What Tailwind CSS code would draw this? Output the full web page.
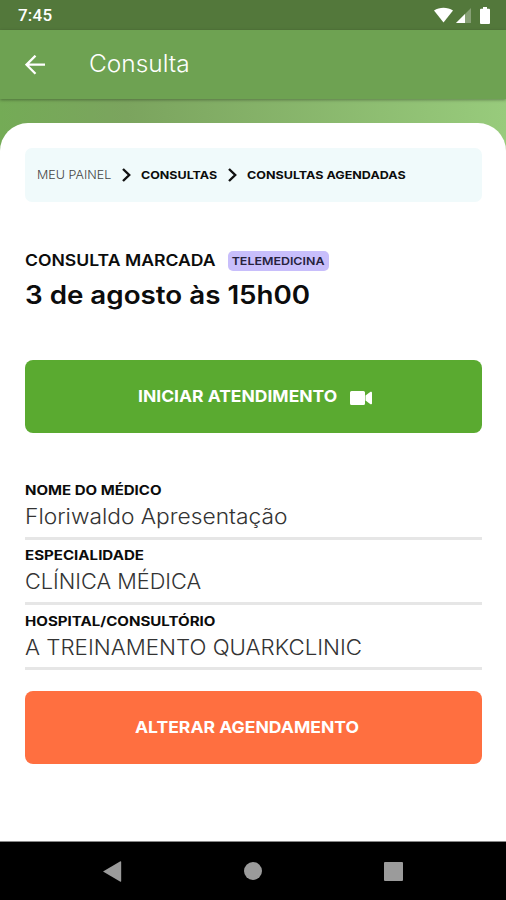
<!DOCTYPE html>
<html lang="pt-BR">
<head>
    <meta charset="UTF-8">
    <meta name="viewport" content="width=device-width, initial-scale=1.0">
    <title>Consulta</title>
    <script src="https://cdn.jsdelivr.net/npm/@tailwindcss/browser@4"></script>
</head>
<body class="w-[506px] h-[900px] overflow-hidden bg-white font-[Inter,sans-serif] text-[#0c0c0c]">
<div class="flex flex-col h-full">

    <!-- Barra de status -->
    <div class="h-[30px] shrink-0 bg-[#53783b] flex items-center justify-between pl-[18px] pr-[16px] text-white">
        <span class="font-[Roboto,sans-serif] font-medium text-[17px] leading-none pt-px tracking-[0.2px]">7:45</span>
        <div class="flex items-center">
            <svg class="w-[19px] h-[16px]" viewBox="0 0 19 16" fill="#fff"><path d="M0 3.500C5.500-.3 13.500-.3 19 3.500L9.500 15.500z"/></svg>
            <svg class="w-[15px] h-[16px] ml-[3px]" viewBox="0 0 15 16" fill="#fff"><path d="M0 16L15 1v15z" fill-opacity=".3"/><path d="M0 16L9 7v9z"/></svg>
            <svg class="w-[10px] h-[17px] ml-[9px]" viewBox="0 0 10 17" fill="#fff"><path d="M3 0h4v1.800h2a1 1 0 0 1 1 1V16a1 1 0 0 1-1 1H1a1 1 0 0 1-1-1V2.800a1 1 0 0 1 1-1h2z"/></svg>
        </div>
    </div>

    <!-- Cabeçalho -->
    <header class="relative z-10 h-[69px] shrink-0 bg-[#6ea252] flex items-center pl-[25px] shadow-[0_1px_3px_rgba(0,0,0,0.35)]">
        <svg class="w-[20px] h-[20px]" viewBox="0 0 20 20" fill="none" stroke="#fff" stroke-width="2.300"><path d="M20 9.700H2M10.500 .7L1.500 9.700l9 9"/></svg>
        <h1 class="ml-[44px] -mt-px text-[23.5px] font-light leading-none origin-left scale-x-[1.04] text-white">Consulta</h1>
    </header>

    <main class="grow bg-linear-to-r from-[#74ab56] from-0% via-[#7ba45e] via-25% to-[#98cb7c] pt-[24px]">
        <div class="h-full bg-white rounded-t-[28px] pl-[25px] pr-[24px] pt-[25px]">

            <!-- Navegação -->
            <nav class="h-[54px] bg-[#f0fafb] rounded-[7px] flex items-center px-[12px] text-[11px] font-bold whitespace-nowrap">
                <span class="w-[74px] pt-px font-light text-[#444] origin-left scale-x-[1.14]">MEU PAINEL</span>
                <svg class="w-[9px] h-[14px] ml-[11px] mr-[10px]" viewBox="0 0 9 14" fill="none" stroke="#111" stroke-width="2.400"><path d="M1 1l6.200 6L1 13"/></svg>
                <span class="w-[76px] pt-px origin-left scale-x-[1.135]">CONSULTAS</span>
                <svg class="w-[9px] h-[14px] ml-[11px] mr-[10px]" viewBox="0 0 9 14" fill="none" stroke="#111" stroke-width="2.400"><path d="M1 1l6.200 6L1 13"/></svg>
                <span class="pt-px origin-left scale-x-[1.14]">CONSULTAS AGENDADAS</span>
            </nav>

            <!-- Consulta marcada -->
            <div class="mt-[48px] h-[22px] flex items-center">
                <div class="w-[203px]">
                    <h2 class="w-fit text-[16px] leading-[20px] pb-[3px] font-semibold origin-left scale-x-[1.1] whitespace-nowrap">CONSULTA MARCADA</h2>
                </div>
                <div class="w-[101px] h-[20px] bg-[#c8befb] rounded-[5px] flex justify-center text-[11px] leading-[20px] font-semibold text-[#26223c]">
                    <p class="scale-x-[1.13]">TELEMEDICINA</p>
                </div>
            </div>
            <p class="mt-[6px] w-fit h-[34px] text-[25px] leading-[34px] font-semibold origin-left scale-x-[1.11]">3 de agosto às 15h00</p>

            <button class="mt-[48px] w-full h-[73px] rounded-[8px] bg-[#5aaa30] text-white text-[16.5px] font-bold flex items-center pl-[113px]">
                <span class="w-[211px] text-left whitespace-nowrap origin-left scale-x-[1.06]">INICIAR ATENDIMENTO</span>
                <svg class="w-[22px] h-[14px] mt-[3px] ml-px" viewBox="0 0 22 14" fill="#fff"><path d="M1.500 0h12A1.500 1.500 0 0 1 15 1.500v11a1.500 1.500 0 0 1-1.500 1.500h-12A1.500 1.500 0 0 1 0 12.500v-11A1.500 1.500 0 0 1 1.500 0z"/><path d="M15.500 4.500L20.500 .8q1.500-.5 1.500 .6v11.200q0 1.100-1.500 .6L15.500 9.500z"/></svg>
            </button>

            <!-- Dados do atendimento -->
            <dl class="mt-[46px]">
                <div class="h-[60.500px] border-b-[3px] border-[#e6e6e6]">
                    <dt class="w-fit text-[13px] leading-[22px] font-bold origin-left scale-x-[1.155]">NOME DO MÉDICO</dt>
                    <dd class="w-fit text-[21px] leading-[32px] font-light origin-left scale-x-[1.083] text-[#333]">Floriwaldo Apresentação</dd>
                </div>
                <div class="mt-[5px] h-[60.300px] border-b-[3px] border-[#e6e6e6]">
                    <dt class="w-fit text-[13px] leading-[21px] font-bold origin-left scale-x-[1.16]">ESPECIALIDADE</dt>
                    <dd class="w-fit text-[21px] leading-[32px] font-light origin-left scale-x-[1.035] text-[#333]">CLÍNICA MÉDICA</dd>
                </div>
                <div class="mt-[5px] h-[60.300px] border-b-[3px] border-[#e6e6e6]">
                    <dt class="w-fit text-[13px] leading-[22px] font-bold origin-left scale-x-[1.16]">HOSPITAL/CONSULTÓRIO</dt>
                    <dd class="w-fit text-[21px] leading-[31px] font-light origin-left scale-x-[1.062] text-[#333]">A TREINAMENTO QUARKCLINIC</dd>
                </div>
            </dl>

            <button class="mt-[21px] w-full h-[73px] rounded-[8px] bg-[#ff6f40] text-white text-[16.5px] font-bold flex items-center pl-[110px]">
                <span class="whitespace-nowrap origin-left scale-x-[1.065]">ALTERAR AGENDAMENTO</span>
            </button>
        </div>
    </main>

    <!-- Barra de navegação do sistema -->
    <footer class="h-[59px] shrink-0 bg-black border-t border-[#888] flex items-center">
        <svg class="w-[19px] h-[21px] ml-[103px]" viewBox="0 0 19 21" fill="#9b9b9b"><path d="M0 10.500L17 .5q1.200-.6 1.200.6v18.800q0 1.200-1.200.6z"/></svg>
        <span class="ml-[122px] size-[18px] rounded-full bg-[#9b9b9b]"></span>
        <span class="ml-[122px] size-[19px] rounded-[1px] bg-[#9b9b9b]"></span>
    </footer>
</div>
</body>
</html>
